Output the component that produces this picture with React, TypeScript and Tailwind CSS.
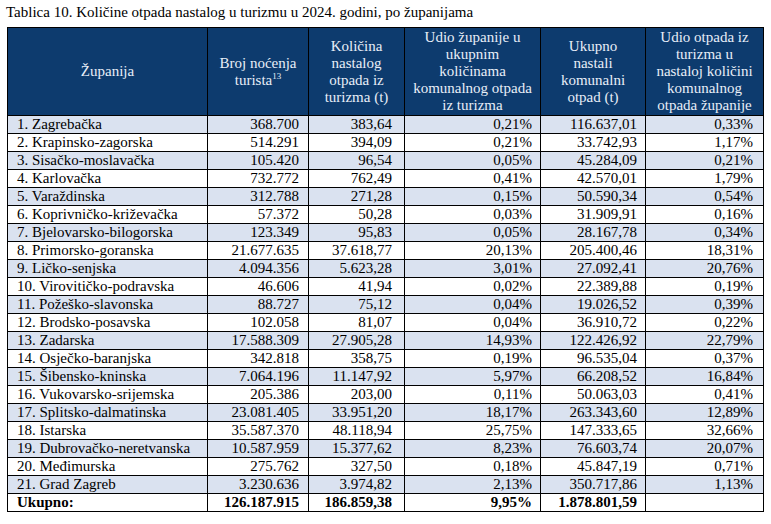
const rows: [string, string, string, string, string, string][] = [
  ["1. Zagrebačka", "368.700", "383,64", "0,21%", "116.637,01", "0,33%"],
  ["2. Krapinsko-zagorska", "514.291", "394,09", "0,21%", "33.742,93", "1,17%"],
  ["3. Sisačko-moslavačka", "105.420", "96,54", "0,05%", "45.284,09", "0,21%"],
  ["4. Karlovačka", "732.772", "762,49", "0,41%", "42.570,01", "1,79%"],
  ["5. Varaždinska", "312.788", "271,28", "0,15%", "50.590,34", "0,54%"],
  ["6. Koprivničko-križevačka", "57.372", "50,28", "0,03%", "31.909,91", "0,16%"],
  ["7. Bjelovarsko-bilogorska", "123.349", "95,83", "0,05%", "28.167,78", "0,34%"],
  ["8. Primorsko-goranska", "21.677.635", "37.618,77", "20,13%", "205.400,46", "18,31%"],
  ["9. Ličko-senjska", "4.094.356", "5.623,28", "3,01%", "27.092,41", "20,76%"],
  ["10. Virovitičko-podravska", "46.606", "41,94", "0,02%", "22.389,88", "0,19%"],
  ["11. Požeško-slavonska", "88.727", "75,12", "0,04%", "19.026,52", "0,39%"],
  ["12. Brodsko-posavska", "102.058", "81,07", "0,04%", "36.910,72", "0,22%"],
  ["13. Zadarska", "17.588.309", "27.905,28", "14,93%", "122.426,92", "22,79%"],
  ["14. Osječko-baranjska", "342.818", "358,75", "0,19%", "96.535,04", "0,37%"],
  ["15. Šibensko-kninska", "7.064.196", "11.147,92", "5,97%", "66.208,52", "16,84%"],
  ["16. Vukovarsko-srijemska", "205.386", "203,00", "0,11%", "50.063,03", "0,41%"],
  ["17. Splitsko-dalmatinska", "23.081.405", "33.951,20", "18,17%", "263.343,60", "12,89%"],
  ["18. Istarska", "35.587.370", "48.118,94", "25,75%", "147.333,65", "32,66%"],
  ["19. Dubrovačko-neretvanska", "10.587.959", "15.377,62", "8,23%", "76.603,74", "20,07%"],
  ["20. Međimurska", "275.762", "327,50", "0,18%", "45.847,19", "0,71%"],
  ["21. Grad Zagreb", "3.230.636", "3.974,82", "2,13%", "350.717,86", "1,13%"],
];

const th = "border border-black bg-[#0d3b6e] px-1 text-center align-middle font-normal text-[#e8eef8] leading-[17px]";
const cell = "border border-black p-0 h-[18px] leading-[17px]";
// right padding per numeric column, as in the source document
const pad = ["pl-[9px] text-left", "pr-[9px] text-right", "pr-[12px] text-right", "pr-[8px] text-right", "pr-[8px] text-right", "pr-[10px] text-right"];

export default function App() {
  return (
    <div className="w-[771px] h-[524px] bg-white text-black font-['Liberation_Serif','Times_New_Roman',serif] text-[15px]">
      <p className="pl-[6px] pt-[3px] h-[27px] leading-[19px] text-[15px]">
        Tablica 10. Količine otpada nastalog u turizmu u 2024. godini, po županijama
      </p>
      <table className="ml-[7px] w-[756px] table-fixed border-collapse border border-black">
        <colgroup>
          <col className="w-[200px]" />
          <col className="w-[101px]" />
          <col className="w-[96px]" />
          <col className="w-[136px]" />
          <col className="w-[105px]" />
          <col className="w-[118px]" />
        </colgroup>
        <thead>
          <tr className="h-[88px]">
            <th className={th}>Županija</th>
            <th className={th}>
              Broj noćenja
              <br />
              turista<span className="relative -top-[6px] text-[9px] leading-none">13</span>
            </th>
            <th className={th}>
              Količina
              <br />
              nastalog
              <br />
              otpada iz
              <br />
              turizma (t)
            </th>
            <th className={th}>
              Udio županije u
              <br />
              ukupnim
              <br />
              količinama
              <br />
              komunalnog otpada
              <br />
              iz turizma
            </th>
            <th className={th}>
              Ukupno
              <br />
              nastali
              <br />
              komunalni
              <br />
              otpad (t)
            </th>
            <th className={th}>
              Udio otpada iz
              <br />
              turizma u
              <br />
              nastaloj količini
              <br />
              komunalnog
              <br />
              otpada županije
            </th>
          </tr>
        </thead>
        <tbody>
          {rows.map((r, i) => (
            <tr key={r[0]} className={i % 2 === 0 ? "bg-[#dae2f0]" : "bg-white"}>
              {r.map((v, j) => (
                <td key={j} className={`${cell} ${pad[j]}`}>
                  {v}
                </td>
              ))}
            </tr>
          ))}
          <tr className="bg-white font-bold">
            {["Ukupno:", "126.187.915", "186.859,38", "9,95%", "1.878.801,59", ""].map((v, j) => (
              <td key={j} className={`${cell} ${pad[j]}`}>
                {v}
              </td>
            ))}
          </tr>
        </tbody>
      </table>
    </div>
  );
}
